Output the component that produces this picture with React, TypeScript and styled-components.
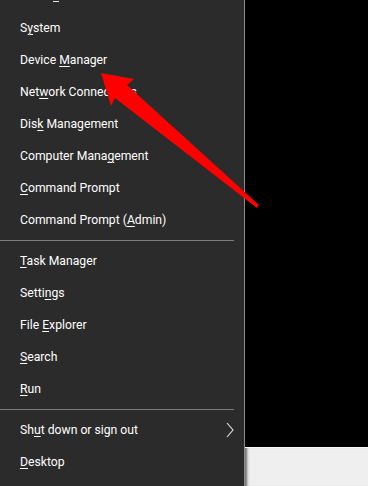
import React from "react";
import styled, { createGlobalStyle } from "styled-components";

const Global = createGlobalStyle`
  html, body { margin: 0; padding: 0; background: #000; }
  body { width: 368px; height: 486px; overflow: hidden; }
  #root { width: 368px; height: 486px; }
`;

const Screen = styled.div`
  position: relative;
  display: flex;
  width: 368px;
  height: 486px;
  overflow: hidden;
  font-family: Roboto, "Noto Sans", sans-serif;
`;

const Menu = styled.nav`
  width: 244px;
  height: 100%;
  background: #2b2b2b;
  border-right: 1px solid #8a8a8a;
  display: flex;
  flex-direction: column;
  overflow: hidden;
`;

const List = styled.div`
  display: flex;
  flex-direction: column;
`;

/* the bottom edge of the item scrolled out above the top */
const TopPeek = styled.div`
  height: 12px;
  padding: 1px 0 0 53px;
  box-sizing: border-box;
  &::before {
    content: "";
    display: block;
    width: 6px;
    height: 1px;
    background: #e6e6e6;
  }
`;

const Item = styled.div`
  height: 32px;
  display: flex;
  align-items: center;
  justify-content: space-between;
  padding: 0 10px 0 20px;
  color: #ffffff;
  font-size: 12.2px;
  white-space: nowrap;
`;

const Key = styled.span`
  text-decoration: underline;
  text-underline-offset: 2px;
`;

const Separator = styled.div`
  height: 9px;
  display: flex;
  align-items: center;
  padding-right: 10px;
  &::after {
    content: "";
    flex: 1;
    height: 1px;
    background: #7c7c7c;
  }
`;

const Side = styled.div`
  flex: 1;
  display: flex;
  flex-direction: column;
`;

const Dark = styled.div`
  flex: 1;
  background: #000;
`;

const Light = styled.div`
  height: 38px;
  background: #efefef;
  border-top: 1px solid #fafafa;
  box-shadow: inset 4px 0 3px -2px #6a6a6a;
`;

const Arrow = styled.svg`
  position: absolute;
  left: 0;
  top: 0;
  pointer-events: none;
`;

type Entry = { pre: string; key: string; post: string; sub?: boolean } | "sep";

const entries: Entry[] = [
  { pre: "S", key: "y", post: "stem" },
  { pre: "Device ", key: "M", post: "anager" },
  { pre: "Net", key: "w", post: "ork Connections" },
  { pre: "Dis", key: "k", post: " Management" },
  { pre: "Computer Mana", key: "g", post: "ement" },
  { pre: "", key: "C", post: "ommand Prompt" },
  { pre: "Command Prompt (", key: "A", post: "dmin)" },
  "sep",
  { pre: "", key: "T", post: "ask Manager" },
  { pre: "Setti", key: "n", post: "gs" },
  { pre: "File ", key: "E", post: "xplorer" },
  { pre: "", key: "S", post: "earch" },
  { pre: "", key: "R", post: "un" },
  "sep",
  { pre: "Sh", key: "u", post: "t down or sign out", sub: true },
  { pre: "", key: "D", post: "esktop" },
];

const Chevron = () => (
  <svg width="8" height="16" viewBox="0 0 8 16">
    <path d="M1 1 L7 8 L1 15" fill="none" stroke="#e8e8e8" strokeWidth="1.1" />
  </svg>
);

export default function App() {
  return (
    <Screen>
      <Global />
      <Menu>
        <List>
          <TopPeek />
          {entries.map((e, i) =>
            e === "sep" ? (
              <Separator key={i} />
            ) : (
              <Item key={i}>
                <span>
                  {e.pre}
                  <Key>{e.key}</Key>
                  {e.post}
                </span>
                {e.sub && <Chevron />}
              </Item>
            )
          )}
        </List>
      </Menu>
      <Side>
        <Dark />
        <Light />
      </Side>
      <Arrow width="368" height="486" viewBox="0 0 368 486">
        <polygon
          points="101,73 134,79 127,85 259,205 257,208 115,98 111,106"
          fill="#ff0000"
        />
      </Arrow>
    </Screen>
  );
}
